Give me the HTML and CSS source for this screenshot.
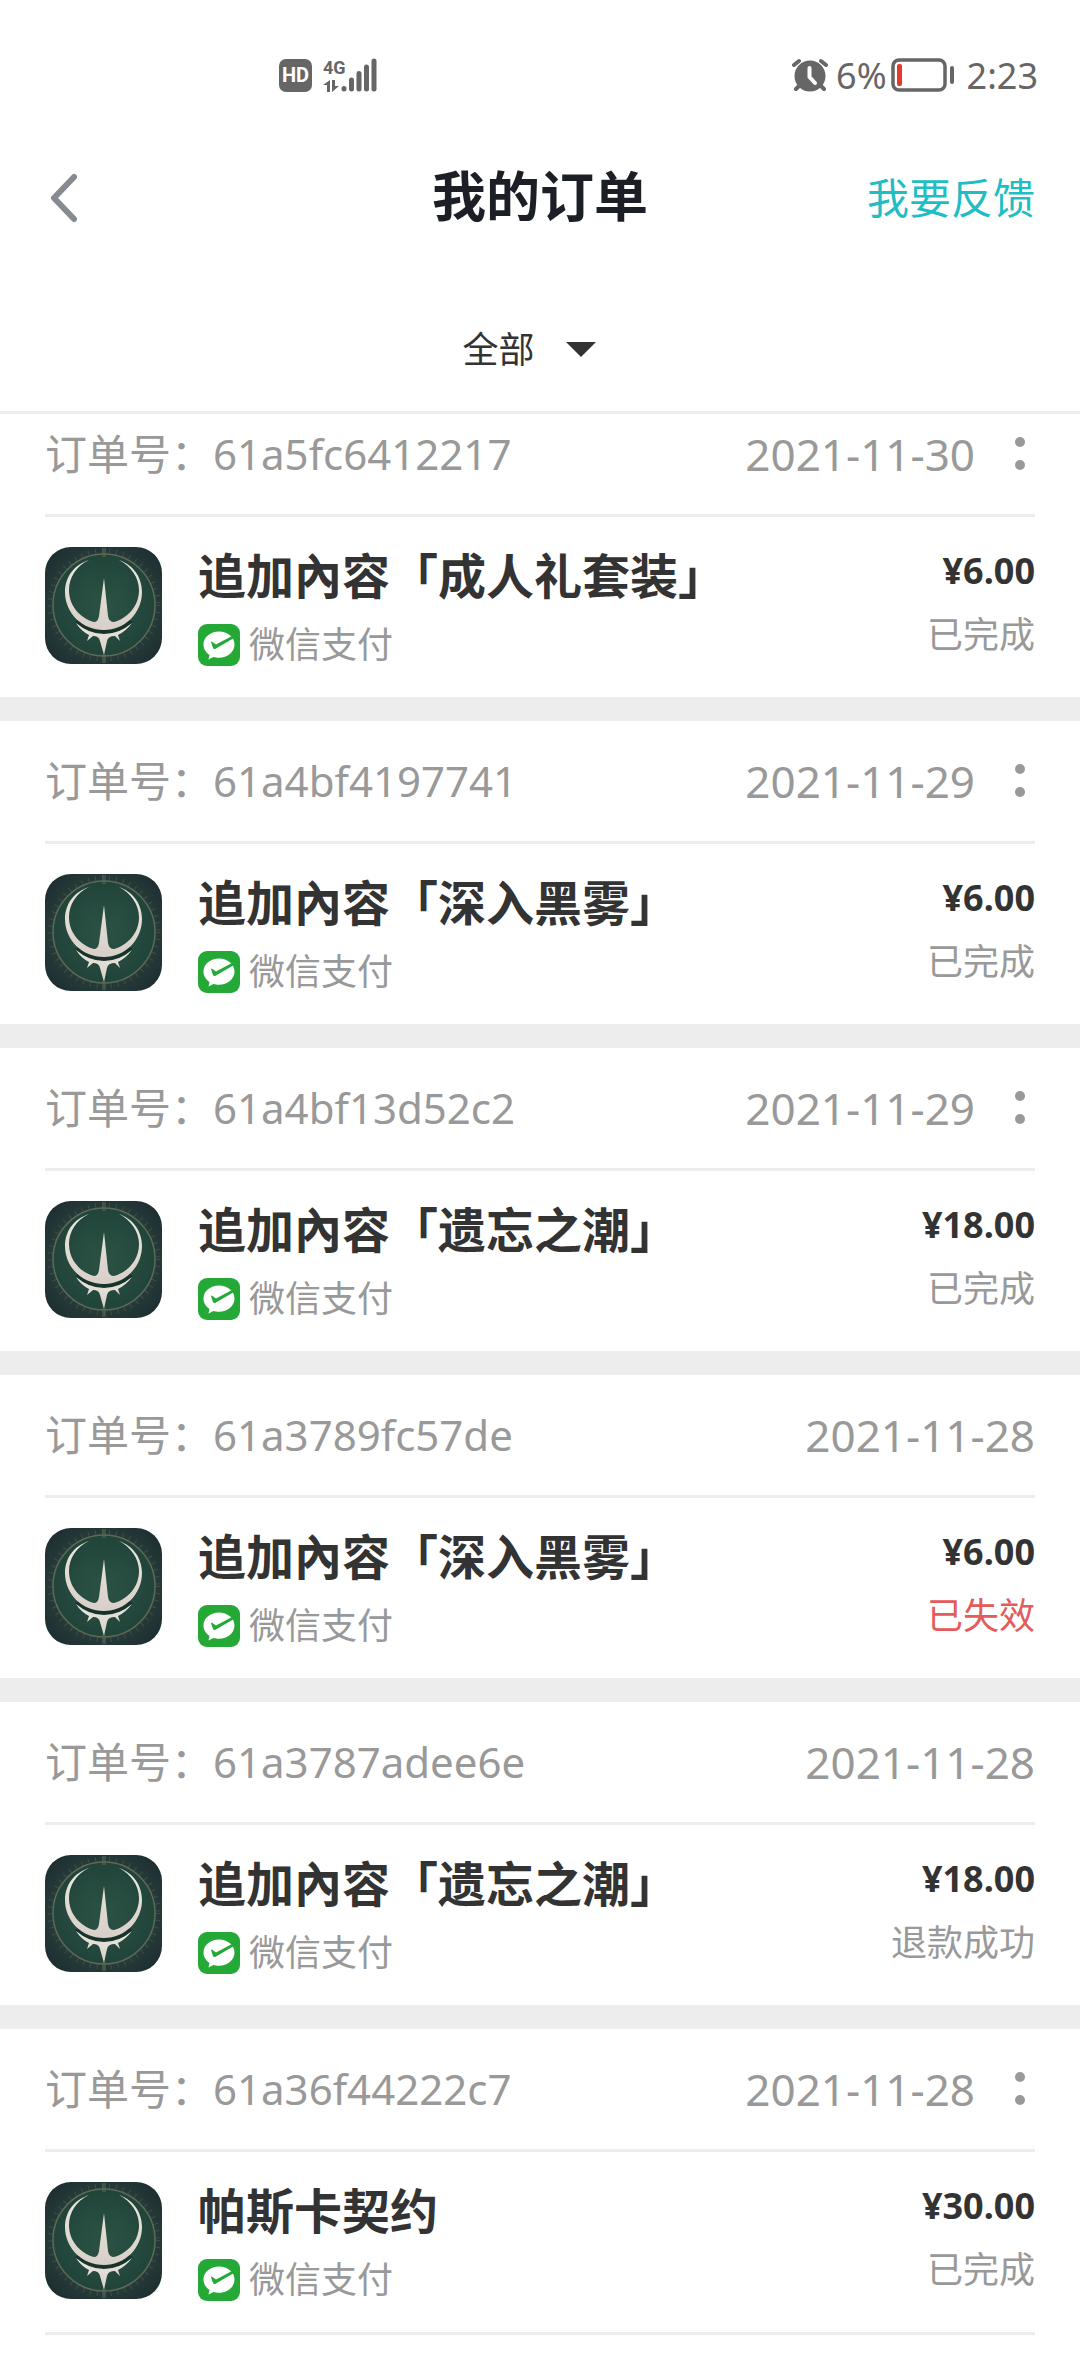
FILE: index.html
```html
<!DOCTYPE html>
<html lang="zh-CN">
<head>
    <meta charset="UTF-8">
    <meta name="viewport" content="width=device-width, initial-scale=1.0">
    <title>我的订单</title>
    <link rel="stylesheet" href="styles.css">
</head>
<body>
    <!-- Iconos compartidos por todos los pedidos -->
    <svg class="sprite" aria-hidden="true">
        <defs>
            <radialGradient id="disc-fill">
                <stop offset="0" stop-color="#2c5345"/>
                <stop offset="1" stop-color="#21443a"/>
            </radialGradient>
            <radialGradient id="back-fill" r="0.7">
                <stop offset="0.6" stop-color="#273c3a"/>
                <stop offset="1" stop-color="#1a292f"/>
            </radialGradient>
            <linearGradient id="metal-fill" x1="0" y1="0" x2="0" y2="1">
                <stop offset="0" stop-color="#e9e8df"/>
                <stop offset="1" stop-color="#d8cfc8"/>
            </linearGradient>
        </defs>
        <symbol id="game" viewBox="0 0 117 117">
            <rect width="117" height="117" fill="url(#back-fill)"/>
            <circle cx="59" cy="58" r="54" fill="none" stroke="#4a584c" stroke-width="5" stroke-dasharray="1 6" opacity="0.7"/>
            <circle cx="59" cy="58" r="51" fill="url(#disc-fill)" stroke="#5d6a57" stroke-width="1.5"/>
            <path d="M59 1v9M59 107v9" stroke="#5d6a57" stroke-width="4" opacity="0.5"/>
            <path d="M30 75Q44 88 59 88Q74 88 88 75L82 72Q72 82 59 82Q46 82 36 72Z" fill="#142d26" opacity="0.8"/>
            <g fill="url(#metal-fill)">
                <path d="M44 13C29 18 20 30 20 45C20 66 37 83 59 83C80 83 97 66 97 45C97 30 88 18 74 13C86 19 94 31 94 43C94 59 83 71 69 75Q64 75 63 69L59 31L54 69Q53 75 49 75C35 71 24 59 24 43C24 31 31 19 44 13Z"/>
                <path d="M31 76Q44 87 59 87Q74 87 87 76Q81 84 73 88L75 94L70 89Q63 89 62 94L59 108L55 94Q54 89 48 89L42 94L44 88Q36 84 31 76Z"/>
            </g>
        </symbol>
        <symbol id="wechat-pay" viewBox="0 0 42 42">
            <rect width="42" height="42" rx="9" fill="#24a937"/>
            <path d="M21 7.500C12.500 7.500 5.500 13 5.500 20.500C5.500 25 8 28.500 11.500 31L10.500 35.500L15.500 33C17 33.500 19 33.800 21 33.800C29.500 33.800 36.500 28 36.500 20.500C36.500 13 29.500 7.500 21 7.500Z" fill="#fff"/>
            <path d="M13 18Q13.500 17.200 14.500 18L18 20.500L34 12L36 14L17.500 24.800Q15.800 25.600 15 24Z" fill="#24a937"/>
        </symbol>
        <symbol id="more" viewBox="0 0 10 34">
            <circle cx="5" cy="5" r="5"/>
            <circle cx="5" cy="28" r="5"/>
        </symbol>
    </svg>

    <header class="header">
        <div class="status-bar">
            <div class="status-group">
                <span class="hd-badge">HD</span>
                <div class="network">
                    <span class="network-type">4G</span>
                    <svg class="network-arrows" viewBox="0 0 16 12" aria-hidden="true">
                        <path d="M7 0V12H4V5H0ZM9 12V0H12V6H16Z" fill="#666"/>
                    </svg>
                </div>
                <svg class="signal" viewBox="0 0 36 34" aria-hidden="true">
                    <path d="M3 30.500V31M10.500 22V31M18 15.500V31M25.500 9V31M33 3V31" fill="none" stroke="#666" stroke-width="5" stroke-linecap="round"/>
                </svg>
            </div>
            <div class="status-group">
                <svg class="alarm" viewBox="0 0 36 34" aria-hidden="true">
                    <circle cx="18" cy="18" r="15.500" fill="#666"/>
                    <path d="M2 7L7 3M34 7L29 3M7 28L4 31M29 28L32 31" fill="none" stroke="#666" stroke-width="4" stroke-linecap="round"/>
                    <path d="M17.500 10V19L23 25" fill="none" stroke="#fff" stroke-width="4" stroke-linecap="round"/>
                </svg>
                <span class="battery-level">6%</span>
                <svg class="battery" viewBox="0 0 64 34" aria-hidden="true">
                    <rect x="2" y="2" width="52" height="30" rx="6" fill="none" stroke="#666" stroke-width="3.500"/>
                    <rect x="6" y="6" width="5" height="22" rx="2" fill="#e8382c"/>
                    <rect x="59" y="8" width="4" height="18" rx="2" fill="#666"/>
                </svg>
                <span class="clock">2:23</span>
            </div>
        </div>

        <nav class="navbar">
            <a href="#" class="back-link" aria-label="返回">
                <svg viewBox="0 0 28 50" aria-hidden="true">
                    <path d="M24 4L4 25L24 46" fill="none" stroke="#868a91" stroke-width="6" stroke-linecap="round" stroke-linejoin="round"/>
                </svg>
            </a>
            <h1 class="page-title">我的订单</h1>
            <a href="#" class="feedback-link">我要反馈</a>
        </nav>

        <div class="filter">
            <label class="filter-field">
                <select class="filter-select" aria-label="订单状态">
                    <option>全部</option>
                </select>
                <svg class="filter-caret" viewBox="0 0 30 15" aria-hidden="true">
                    <path d="M0 0H30L15 15Z" fill="#333"/>
                </svg>
            </label>
        </div>
    </header>

    <main class="orders">
        <article class="order">
            <div class="order-head">
                <span class="order-number">订单号：61a5fc6412217</span>
                <time class="order-date">2021-11-30</time>
                <button type="button" class="more-button" aria-label="更多"><svg><use href="#more"/></svg></button>
            </div>
            <div class="order-body">
                <svg class="order-image"><use href="#game"/></svg>
                <div class="order-info">
                    <h2 class="order-title">追加內容「成人礼套装」</h2>
                    <div class="payment"><svg><use href="#wechat-pay"/></svg>微信支付</div>
                </div>
                <div class="order-result">
                    <div class="price">¥6.00</div>
                    <div class="state">已完成</div>
                </div>
            </div>
        </article>

        <article class="order">
            <div class="order-head">
                <span class="order-number">订单号：61a4bf4197741</span>
                <time class="order-date">2021-11-29</time>
                <button type="button" class="more-button" aria-label="更多"><svg><use href="#more"/></svg></button>
            </div>
            <div class="order-body">
                <svg class="order-image"><use href="#game"/></svg>
                <div class="order-info">
                    <h2 class="order-title">追加內容「深入黑雾」</h2>
                    <div class="payment"><svg><use href="#wechat-pay"/></svg>微信支付</div>
                </div>
                <div class="order-result">
                    <div class="price">¥6.00</div>
                    <div class="state">已完成</div>
                </div>
            </div>
        </article>

        <article class="order">
            <div class="order-head">
                <span class="order-number">订单号：61a4bf13d52c2</span>
                <time class="order-date">2021-11-29</time>
                <button type="button" class="more-button" aria-label="更多"><svg><use href="#more"/></svg></button>
            </div>
            <div class="order-body">
                <svg class="order-image"><use href="#game"/></svg>
                <div class="order-info">
                    <h2 class="order-title">追加內容「遗忘之潮」</h2>
                    <div class="payment"><svg><use href="#wechat-pay"/></svg>微信支付</div>
                </div>
                <div class="order-result">
                    <div class="price">¥18.00</div>
                    <div class="state">已完成</div>
                </div>
            </div>
        </article>

        <article class="order">
            <div class="order-head">
                <span class="order-number">订单号：61a3789fc57de</span>
                <time class="order-date">2021-11-28</time>
            </div>
            <div class="order-body">
                <svg class="order-image"><use href="#game"/></svg>
                <div class="order-info">
                    <h2 class="order-title">追加內容「深入黑雾」</h2>
                    <div class="payment"><svg><use href="#wechat-pay"/></svg>微信支付</div>
                </div>
                <div class="order-result">
                    <div class="price">¥6.00</div>
                    <div class="state state-expired">已失效</div>
                </div>
            </div>
        </article>

        <article class="order">
            <div class="order-head">
                <span class="order-number">订单号：61a3787adee6e</span>
                <time class="order-date">2021-11-28</time>
            </div>
            <div class="order-body">
                <svg class="order-image"><use href="#game"/></svg>
                <div class="order-info">
                    <h2 class="order-title">追加內容「遗忘之潮」</h2>
                    <div class="payment"><svg><use href="#wechat-pay"/></svg>微信支付</div>
                </div>
                <div class="order-result">
                    <div class="price">¥18.00</div>
                    <div class="state">退款成功</div>
                </div>
            </div>
        </article>

        <article class="order">
            <div class="order-head">
                <span class="order-number">订单号：61a36f44222c7</span>
                <time class="order-date">2021-11-28</time>
                <button type="button" class="more-button" aria-label="更多"><svg><use href="#more"/></svg></button>
            </div>
            <div class="order-body">
                <svg class="order-image"><use href="#game"/></svg>
                <div class="order-info">
                    <h2 class="order-title">帕斯卡契约</h2>
                    <div class="payment"><svg><use href="#wechat-pay"/></svg>微信支付</div>
                </div>
                <div class="order-result">
                    <div class="price">¥30.00</div>
                    <div class="state">已完成</div>
                </div>
            </div>
        </article>
    </main>
</body>
</html>
```

FILE: styles.css
```css
* {
    margin: 0;
    padding: 0;
    box-sizing: border-box;
}

body {
    font-family: 'Noto Sans', 'Noto Sans CJK SC', sans-serif;
    font-size: 36px;
    color: #333;
    background-color: #fff;
}

.sprite {
    display: block;
    width: 0;
    height: 0;
}

/* Cabecera: queda por encima de la lista */
.header {
    position: relative;
    z-index: 1;
    background-color: #fff;
    border-bottom: 3px solid #ededed;
}

.status-bar {
    display: flex;
    justify-content: space-between;
    align-items: center;
    height: 150px;
    padding: 0 42px 0 279px;
    color: #666;
}

.status-group {
    display: flex;
    align-items: center;
}

.hd-badge {
    width: 33px;
    margin-right: 11px;
    border-radius: 7px;
    background-color: #666;
    color: #fff;
    font-family: Roboto, sans-serif;
    font-size: 20px;
    font-weight: bold;
    line-height: 33px;
    text-align: center;
}

.network {
    display: flex;
    flex-direction: column;
    gap: 3px;
    width: 18px;
}

.network-type {
    font-family: Roboto, sans-serif;
    font-size: 18px;
    font-weight: bold;
    line-height: 18px;
}

.network-arrows {
    width: 16px;
    height: 12px;
}

.signal {
    width: 36px;
    height: 34px;
}

.alarm {
    width: 36px;
    height: 34px;
    margin-right: 8px;
}

.battery {
    width: 64px;
    height: 34px;
    margin-left: 4px;
    margin-right: 12px;
}

.navbar {
    display: grid;
    grid-template-columns: 1fr auto 1fr;
    align-items: center;
    height: 92px;
    padding: 0 45px;
}

.back-link {
    justify-self: start;
    padding: 4px 5px 0;
}

.back-link svg {
    display: block;
    width: 28px;
    height: 50px;
}

.page-title {
    font-size: 54px;
    font-weight: bold;
    line-height: 72px;
    color: #1c1f26;
}

.feedback-link {
    justify-self: end;
    padding-top: 4px;
    color: #1fbdc4;
    font-size: 42px;
    line-height: 60px;
    text-decoration: none;
}

.filter {
    display: flex;
    justify-content: center;
    padding: 77px 0 32px;
}

.filter-field {
    position: relative;
}

.filter-select {
    display: block;
    height: 60px;
    padding-right: 82px;
    border: none;
    background: none;
    color: #333;
    font: inherit;
    appearance: none;
    cursor: pointer;
}

.filter-caret {
    position: absolute;
    top: 23px;
    right: 22px;
    width: 30px;
    height: 15px;
    pointer-events: none;
}

/* La lista aparece un poco desplazada bajo la cabecera */
.orders {
    margin-top: -20px;
}

.order + .order {
    border-top: 24px solid #ededed;
}

.order-head {
    display: flex;
    align-items: center;
    height: 123px;
    margin: 0 45px;
    border-bottom: 3px solid #ededed;
    color: #999;
    font-size: 42px;
    line-height: 60px;
}

.order-number {
    flex: 1;
}

.order-date {
    font-size: 44px;
}

.more-button {
    display: flex;
    justify-content: flex-end;
    width: 60px;
    padding-right: 10px;
    border: none;
    background: none;
    cursor: pointer;
}

.more-button svg {
    width: 10px;
    height: 34px;
    fill: #999;
}

.order-body {
    display: flex;
    align-items: flex-start;
    margin: 0 45px;
    padding: 30px 0 31px;
}

.order:last-child .order-body {
    border-bottom: 3px solid #ededed;
}

.order-image {
    width: 117px;
    height: 117px;
    margin-right: 36px;
    border-radius: 26px;
}

.order-info {
    flex: 1;
}

.order-title {
    margin-bottom: 19px;
    font-size: 48px;
    font-weight: bold;
    line-height: 58px;
}

.payment {
    display: flex;
    align-items: center;
    gap: 9px;
    color: #999;
    line-height: 42px;
}

.payment svg {
    width: 42px;
    height: 42px;
}

.order-result {
    text-align: right;
    line-height: 48px;
}

.price {
    margin-bottom: 16px;
    font-weight: bold;
}

.state {
    color: #999;
}

.state-expired {
    color: #e35b5b;
}
```
